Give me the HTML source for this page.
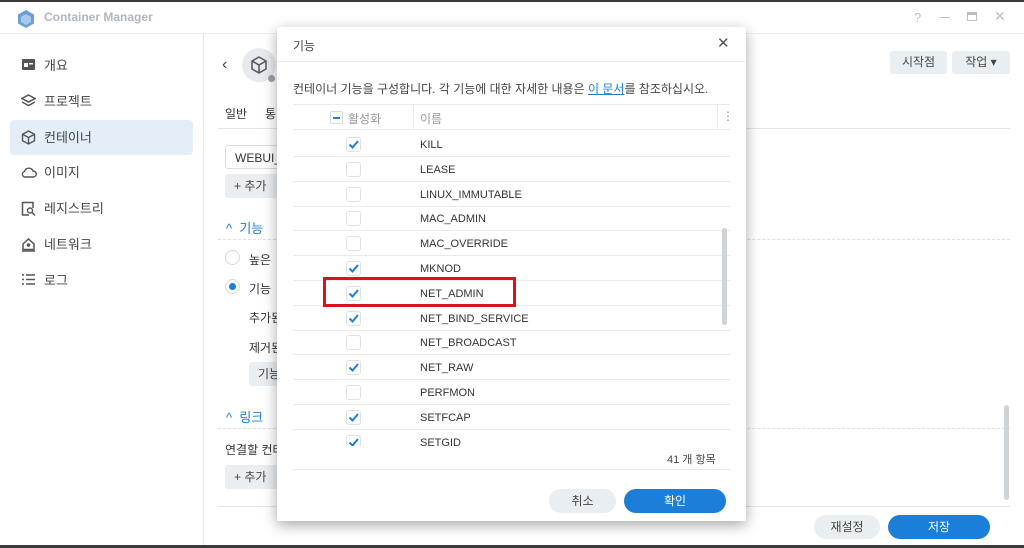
<!DOCTYPE html>
<html><head><meta charset="utf-8"><style>
*{box-sizing:border-box;margin:0;padding:0}
body{width:1024px;height:548px;overflow:hidden;background:#fff;font-family:"Liberation Sans","Noto Sans CJK KR",sans-serif;color:#333;position:relative;font-size:12px}
.a{position:absolute}
.top{left:0;top:0;width:1024px;height:2px;background:#3a3a3a}
.bot{left:0;top:545px;width:1024px;height:3px;background:#3a3a3a}
.title{left:0;top:2px;width:1024px;height:32px;border-bottom:1px solid #eceff2}
.side{left:0;top:34px;width:204px;height:511px;border-right:1px solid #e6e9ec}
.nav{left:10px;width:183px;height:35px;font-size:13px;color:#444;padding-left:34px;line-height:35px;border-radius:4px}
.nav svg{position:absolute;left:11px;top:10px}
.btn{background:#e9eef2;border-radius:3px;text-align:center;color:#444;font-size:12px}
.modal{left:277px;top:27px;width:469px;height:494px;background:#fff;box-shadow:0 4px 14px rgba(0,0,0,.35);border-radius:2px}
.row{left:16px;width:437px;height:25px;border-bottom:1px solid #e7eaee}
.cb{position:absolute;left:53px;top:5px;width:15px;height:15px;border:1px solid #dde1e5;border-radius:3px;background:#fff}
.nm{position:absolute;left:127px;top:7px;font-size:11px;color:#333}
</style></head><body>
<div class="a top"></div>
<div class="a title">
 <svg class="a" style="left:16px;top:7px" width="20" height="20" viewBox="0 0 20 20"><path d="M10 1 L18 5.5 V14.5 L10 19 L2 14.5 V5.5Z" fill="#6d9fd6"/><path d="M10 5 L15 8 V13 L10 16 L5 13 V8Z" fill="#a9c8ea"/></svg>
 <div class="a" style="left:44px;top:8px;font-size:12px;font-weight:bold;color:#b0b6bd">Container Manager</div>
 <div class="a" style="left:914px;top:8px;color:#b8bec4;font-size:13px">?</div>
 <div class="a" style="left:940px;top:15px;width:10px;height:1px;background:#b8bec4"></div>
 <div class="a" style="left:967px;top:10px;width:10px;height:9px;border:1px solid #b8bec4;border-top-width:3px"></div>
 <div class="a" style="left:994px;top:6px;color:#b8bec4;font-size:14px">✕</div>
</div>
<div class="a side">
 <div class="a nav" style="top:14px"><svg width="15" height="13"><rect x="1" y="1" width="13" height="11" rx="1" fill="#555"/><rect x="3" y="5" width="4" height="4" fill="#fff"/><rect x="8" y="5" width="4" height="1.5" fill="#fff"/></svg>개요</div>
 <div class="a nav" style="top:50px"><svg width="15" height="15"><path d="M7.5 1 L14 4.5 L7.5 8 L1 4.5Z M1 8 L7.5 11.5 L14 8" fill="none" stroke="#555" stroke-width="1.5"/></svg>프로젝트</div>
 <div class="a nav" style="top:86px;background:#e3eef9"><svg width="15" height="15"><path d="M7.5 1 L13.5 4.3 V10.7 L7.5 14 L1.5 10.7 V4.3Z M1.5 4.3 L7.5 7.5 L13.5 4.3 M7.5 7.5 V14" fill="none" stroke="#555" stroke-width="1.4"/></svg>컨테이너</div>
 <div class="a nav" style="top:121px"><svg width="16" height="14"><path d="M4 12 H12.5 A3 3 0 0 0 12 6 A4.5 4.5 0 0 0 3.5 6.5 A2.8 2.8 0 0 0 4 12Z" fill="none" stroke="#555" stroke-width="1.4"/></svg>이미지</div>
 <div class="a nav" style="top:157px"><svg width="15" height="15"><path d="M8 14 H1.5 V1.5 H12 V7" fill="none" stroke="#555" stroke-width="1.5"/><circle cx="9" cy="9.5" r="2.5" fill="none" stroke="#555" stroke-width="1.4"/><path d="M11 11.5 L14 14.5" stroke="#555" stroke-width="1.5"/></svg>레지스트리</div>
 <div class="a nav" style="top:193px"><svg width="15" height="15"><path d="M2 7 L7.5 2 L13 7 V12.5 H2Z" fill="none" stroke="#555" stroke-width="1.5"/><circle cx="7.5" cy="8" r="1.8" fill="#555"/><path d="M1 14 H14" stroke="#555" stroke-width="1.5"/></svg>네트워크</div>
 <div class="a nav" style="top:229px"><svg width="15" height="13"><path d="M1 2H3M5 2H14M1 6.5H3M5 6.5H14M1 11H3M5 11H14" stroke="#555" stroke-width="1.5"/></svg>로그</div>
</div>
<div class="a" style="left:222px;top:56px;font-size:16px;color:#444">‹</div>
<div class="a" style="left:242px;top:48px;width:34px;height:34px;border-radius:50%;background:#e6eaee"></div>
<svg class="a" style="left:249px;top:55px" width="20" height="20"><path d="M10 2 L17 6 V14 L10 18 L3 14 V6Z M3 6 L10 10 L17 6 M10 10 V18" fill="none" stroke="#555" stroke-width="1.5"/></svg>
<div class="a" style="left:268px;top:75px;width:7px;height:7px;border-radius:50%;background:#9aa0a6"></div>
<div class="a" style="left:225px;top:105px;font-size:12px">일반</div>
<div class="a" style="left:265px;top:105px;font-size:12px">통</div>
<div class="a" style="left:218px;top:128px;width:792px;height:1px;background:#e1e4e8"></div>
<div class="a" style="left:225px;top:145px;width:60px;height:24px;border:1px solid #d8dde2;border-radius:3px;padding:5px 9px;font-size:12px">WEBUI_</div>
<div class="a btn" style="left:225px;top:174px;width:60px;height:24px;line-height:24px;text-align:left;padding-left:9px">+ 추가</div>
<div class="a" style="left:226px;top:218px;color:#1b7ed8;font-size:13px">^ &nbsp;기능</div>
<div class="a" style="left:218px;top:239px;width:792px;border-top:1px dashed #dcdfe3"></div>
<div class="a" style="left:225px;top:250px;width:15px;height:15px;border:1px solid #d3d8dd;border-radius:50%"></div>
<div class="a" style="left:249px;top:251px">높은</div>
<div class="a" style="left:225px;top:279px;width:15px;height:15px;border:1px solid #d3d8dd;border-radius:50%"><div style="margin:3px;width:7px;height:7px;border-radius:50%;background:#1b7ed8"></div></div>
<div class="a" style="left:249px;top:280px">기능</div>
<div class="a" style="left:249px;top:309px">추가된</div>
<div class="a" style="left:249px;top:339px">제거된</div>
<div class="a btn" style="left:249px;top:362px;width:40px;height:24px;line-height:24px">기능</div>
<div class="a" style="left:226px;top:407px;color:#1b7ed8;font-size:13px">^ &nbsp;링크</div>
<div class="a" style="left:218px;top:428px;width:792px;border-top:1px dashed #dcdfe3"></div>
<div class="a" style="left:225px;top:441px">연결할 컨테</div>
<div class="a btn" style="left:225px;top:465px;width:60px;height:24px;line-height:24px;text-align:left;padding-left:9px">+ 추가</div>
<div class="a" style="left:218px;top:506px;width:792px;height:1px;background:#e1e4e8"></div>
<div class="a btn" style="left:890px;top:51px;width:57px;height:23px;line-height:23px">시작점</div>
<div class="a btn" style="left:952px;top:51px;width:58px;height:23px;line-height:23px">작업 ▾</div>
<div class="a" style="left:1004px;top:405px;width:5px;height:95px;border-radius:3px;background:#cfd4d9"></div>
<div class="a btn" style="left:814px;top:515px;width:66px;height:24px;line-height:24px;border-radius:12px">재설정</div>
<div class="a btn" style="left:888px;top:515px;width:102px;height:24px;line-height:24px;border-radius:12px;background:#1b7ed8;color:#fff">저장</div>
<div class="a modal">
 <div class="a" style="left:16px;top:10px;font-size:12px;color:#444">기능</div>
 <div class="a" style="left:440px;top:7px;font-size:15px;color:#555">✕</div>
 <div class="a" style="left:0;top:34px;width:469px;height:1px;background:#eceff2"></div>
 <div class="a" style="left:16px;top:53px;font-size:12px;color:#444">컨테이너 기능을 구성합니다. 각 기능에 대한 자세한 내용은 <span style="color:#1b7ed8;text-decoration:underline">이 문서</span>를 참조하십시오.</div>
 <div class="a" style="left:16px;top:77px;width:437px;height:26px;border-top:1px solid #e7eaee;border-bottom:1px solid #e7eaee">
  <div class="a" style="left:37px;top:6px;width:13px;height:13px;border:1px solid #d6dbe0;border-radius:2px"><div style="margin:5px 2px;height:2px;background:#1b7ed8"></div></div>
  <div class="a" style="left:55px;top:5px;color:#999;font-size:12px">활성화</div>
  <div class="a" style="left:120px;top:0;width:1px;height:25px;background:#e7eaee"></div>
  <div class="a" style="left:127px;top:5px;color:#999;font-size:12px">이름</div>
  <div class="a" style="left:424px;top:0;width:1px;height:25px;background:#e7eaee"></div>
  <div class="a" style="left:429px;top:4px;color:#888">⋮</div>
 </div>
 <div class="a" style="left:0;top:104px;width:469px;height:315px;overflow:hidden" id="rows"></div>
 <div class="a" style="left:445px;top:201px;width:5px;height:97px;border-radius:3px;background:#cfd4d9"></div>
 <div class="a" style="left:390px;top:424px;font-size:11px;color:#444">41 개 항목</div>
 <div class="a" style="left:16px;top:442px;width:437px;height:1px;background:#e7eaee"></div>
 <div class="a btn" style="left:272px;top:462px;width:67px;height:24px;line-height:24px;border-radius:12px">취소</div>
 <div class="a btn" style="left:347px;top:462px;width:102px;height:24px;line-height:24px;border-radius:12px;background:#1b7ed8;color:#fff">확인</div>
 <div class="a" style="left:46px;top:250px;width:193px;height:30px;border:3px solid #d9121f"></div>
</div>
<script>
var d=[["KILL",1],["LEASE",0],["LINUX_IMMUTABLE",0],["MAC_ADMIN",0],["MAC_OVERRIDE",0],["MKNOD",1],["NET_ADMIN",1],["NET_BIND_SERVICE",1],["NET_BROADCAST",0],["NET_RAW",1],["PERFMON",0],["SETFCAP",1],["SETGID",1]];
var h="";d.forEach(function(r,i){h+='<div class="a row" style="top:'+(1+i*24.8)+'px"><div class="cb">'+(r[1]?'<svg width="13" height="13" style="position:absolute;left:0;top:0"><path d="M2.5 6.5 L5.5 9.5 L11 3" fill="none" stroke="#1b7ed8" stroke-width="2"/></svg>':'')+'</div><div class="nm">'+r[0]+'</div></div>'});
document.getElementById("rows").innerHTML=h;
</script>
<div class="a bot"></div>
</body></html>
